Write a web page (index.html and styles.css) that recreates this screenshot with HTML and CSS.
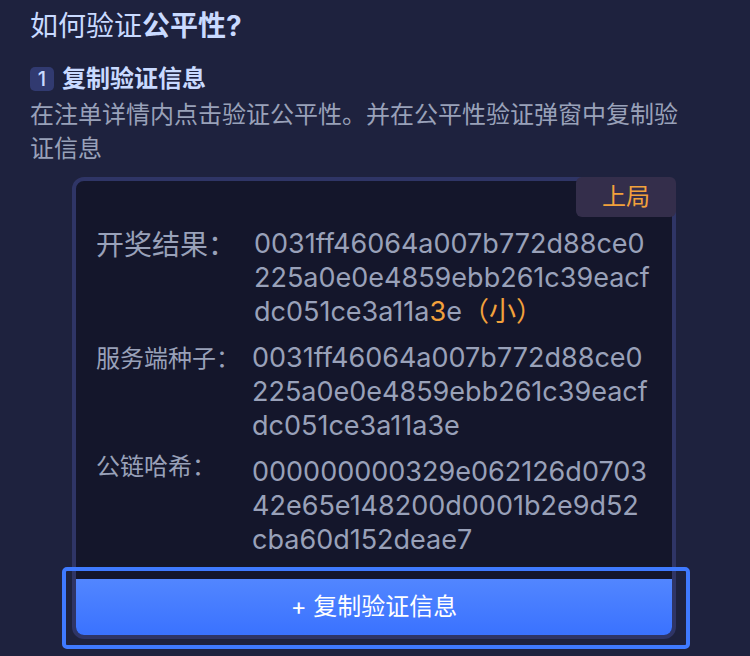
FILE: index.html
```html
<!DOCTYPE html>
<html lang="zh-CN">
<head>
<meta charset="utf-8">
<meta name="viewport" content="width=device-width, initial-scale=1">
<title>如何验证公平性?</title>
<link rel="stylesheet" href="styles.css">
</head>
<body>
<main class="page">
  <h1 class="title">如何验证<strong>公平性?</strong></h1>
  <section class="step">
    <h2 class="step-title"><span class="step-number">1</span>复制验证信息</h2>
    <p class="step-text">在注单详情内点击验证公平性。并在公平性验证弹窗中复制验证信息</p>
  </section>
  <section class="highlight-area">
    <div class="card">
      <span class="tag">上局</span>
      <dl class="details">
        <div class="row row-result">
          <dt>开奖结果：</dt>
          <dd>0031ff46064a007b772d88ce0<br>225a0e0e4859ebb261c39eacf<br>dc051ce3a11a<span class="accent">3</span>e<span class="accent">（小）</span></dd>
        </div>
        <div class="row">
          <dt>服务端种子：</dt>
          <dd>0031ff46064a007b772d88ce0<br>225a0e0e4859ebb261c39eacf<br>dc051ce3a11a3e</dd>
        </div>
        <div class="row row-chain">
          <dt>公链哈希：</dt>
          <dd>000000000329e062126d0703<br>42e65e148200d0001b2e9d52<br>cba60d152deae7</dd>
        </div>
      </dl>
      <button class="copy" type="button">+ 复制验证信息</button>
    </div>
    <div class="focus-ring"></div>
  </section>
</main>
</body>
</html>
```
FILE: styles.css
```css
* {
  box-sizing: border-box;
  margin: 0;
}

body {
  background: #1e223e;
  color: #99a1b9;
  font-family: Inter, "Noto Sans CJK SC", sans-serif;
}

.page {
  padding: 4px 60px 17px 30px;
}

.title {
  color: #c9daff;
  font-size: 28px;
  font-weight: 400;
  line-height: 44px;
}

.title strong {
  font-weight: 700;
}

.step {
  margin-top: 14px;
}

.step-title {
  display: flex;
  align-items: center;
  gap: 8px;
  color: #c9daff;
  font-size: 24px;
  line-height: 34px;
}

.step-number {
  width: 24px;
  border-radius: 5px;
  background: #313a70;
  font-size: 20px;
  font-weight: 500;
  line-height: 24px;
  text-align: center;
}

.step-text {
  margin-top: 2px;
  font-size: 24px;
  line-height: 34px;
}

.highlight-area {
  position: relative;
  margin-top: 11px;
  padding: 0 14px 0 42px;
}

.card {
  position: relative;
  border: 4px solid #2f3566;
  border-radius: 12px;
  background: #14162b;
}

.tag {
  position: absolute;
  top: -4px;
  right: -4px;
  width: 100px;
  border-radius: 6px;
  background: #342e4b;
  color: #f2a13c;
  font-size: 24px;
  line-height: 40px;
  text-align: center;
}

.details {
  padding: 46px 0 22px 20px;
}

.row {
  display: grid;
  grid-template-columns: 156px 1fr;
  font-size: 27px;
  line-height: 34px;
}

.row + .row {
  margin-top: 12px;
}

.row dt {
  font-size: 24px;
  line-height: 36px;
  white-space: nowrap;
}

.row dd {
  white-space: nowrap;
}

.row-result {
  grid-template-columns: 158px 1fr;
}

.row-result dt {
  font-size: 28px;
}

.row-chain dt {
  line-height: 24px;
}

.accent {
  color: #f2a13c;
}

.copy {
  display: block;
  width: 100%;
  height: 56px;
  border: 0;
  border-radius: 0 0 8px 8px;
  background: linear-gradient(#5286ff, #3a72ff);
  color: #fff;
  font: 24px/34px Inter, "Noto Sans CJK SC", sans-serif;
}

.focus-ring {
  position: absolute;
  right: 0;
  bottom: -10px;
  left: 32px;
  height: 82px;
  border: 4px solid #3f7aff;
  border-radius: 5px;
  pointer-events: none;
}
```
